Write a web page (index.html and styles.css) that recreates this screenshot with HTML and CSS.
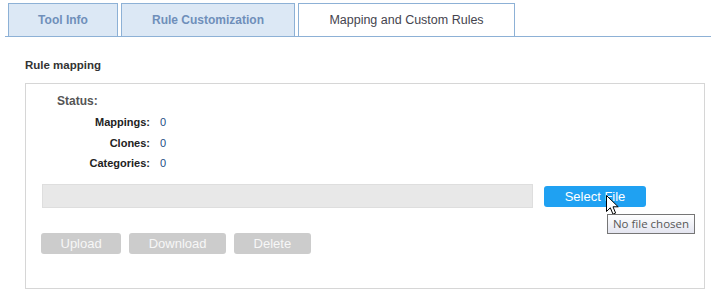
FILE: index.html
```html
<!DOCTYPE html>
<html>
<head>
<meta charset="utf-8">
<link rel="stylesheet" href="styles.css">
</head>
<body>
<div class="tabs">
  <div class="tab tab-info">Tool Info</div>
  <div class="tab tab-rules">Rule Customization</div>
  <div class="tab tab-active">Mapping and Custom Rules</div>
</div>
<div class="section-title">Rule mapping</div>
<div class="panel">
  <div class="status-title">Status:</div>
  <div class="stats">
    <div class="stat-label">Mappings:</div><div class="stat-value">0</div>
    <div class="stat-label">Clones:</div><div class="stat-value">0</div>
    <div class="stat-label">Categories:</div><div class="stat-value">0</div>
  </div>
  <div class="file-row">
    <div class="file-bar"></div>
    <div class="select-wrap">
      <div class="btn-select">Select File</div>
      <svg class="cursor" width="13" height="21" viewBox="0 0 13 21"><path d="M0.5 0.5 L0.5 16.5 L4.3 12.8 L7 19.2 L9.6 18.1 L7 11.8 L12.2 11.8 Z" fill="#fff" stroke="#000" stroke-width="1" stroke-linejoin="miter"/></svg>
      <div class="tooltip">No file chosen</div>
    </div>
  </div>
  <div class="actions">
    <div class="btn-gray">Upload</div>
    <div class="btn-gray">Download</div>
    <div class="btn-gray">Delete</div>
  </div>
</div>
</body>
</html>
```
FILE: styles.css
```css
html, body {
  margin: 0;
  padding: 0;
  background: #fff;
}
body {
  font-family: "Liberation Sans", Arial, sans-serif;
  width: 711px;
  height: 295px;
  overflow: hidden;
}
.tabs {
  display: flex;
  gap: 3px;
  margin: 3px 0 0 5px;
  padding-left: 3px;
  border-bottom: 1px solid #8db1d6;
  height: 33px;
}
.tab {
  box-sizing: border-box;
  height: 33px;
  border: 1px solid #8db1d6;
  border-bottom: none;
  background: #dce8f5;
  color: #6f8fba;
  font-weight: bold;
  font-size: 12px;
  line-height: 32px;
  text-align: center;
}
.tab-info { width: 110px; }
.tab-rules { width: 174px; }
.tab-active {
  width: 217px;
  background: #fff;
  color: #45444e;
  font-weight: normal;
  font-size: 12.5px;
}
.section-title {
  margin: 21px 0 0 25px;
  font-size: 11.5px;
  font-weight: bold;
  color: #333;
  line-height: 14px;
}
.panel {
  margin: 11px 6px 0 25px;
  border: 1px solid #d6d6d6;
  height: 206px;
  box-sizing: border-box;
  padding: 7px 0 0 16px;
}
.status-title {
  margin-left: 15px;
  font-size: 12px;
  font-weight: bold;
  color: #555;
  line-height: 20px;
  margin-bottom: 1px;
}
.stats {
  display: grid;
  grid-template-columns: 93px auto;
  column-gap: 10px;
  margin-left: 15px;
  font-size: 11px;
  line-height: 20.5px;
}
.stat-label {
  font-weight: bold;
  color: #222;
  text-align: right;
}
.stat-value {
  color: #234d84;
}
.file-row {
  display: flex;
  align-items: center;
  gap: 11px;
  margin-top: 10px;
}
.file-bar {
  width: 491px;
  height: 24px;
  box-sizing: border-box;
  background: #e8e8e8;
  border: 1px solid #dedede;
}
.select-wrap {
  position: relative;
  margin-top: 2px;
}
.btn-select {
  width: 102px;
  height: 21px;
  border-radius: 3px;
  background: #1fa1f2;
  color: #fff;
  font-size: 13px;
  line-height: 21px;
  text-align: center;
}
.cursor {
  position: absolute;
  left: 62px;
  top: 9px;
}
.tooltip {
  position: absolute;
  left: 63px;
  top: 28px;
  box-sizing: border-box;
  width: 88px;
  height: 20px;
  border: 1px solid #767676;
  background: linear-gradient(#ffffff, #e4e5f0);
  color: #575757;
  font-family: "Open Sans", "Noto Sans", sans-serif;
  font-size: 11.5px;
  line-height: 18px;
  text-align: center;
  white-space: nowrap;
}
.actions {
  display: flex;
  gap: 8px;
  margin-top: 25px;
  margin-left: -1px;
}
.btn-gray {
  height: 21px;
  padding: 0 19.5px;
  border-radius: 3px;
  background: #cccccc;
  color: #f7f7f7;
  font-size: 13px;
  line-height: 21px;
}
```
